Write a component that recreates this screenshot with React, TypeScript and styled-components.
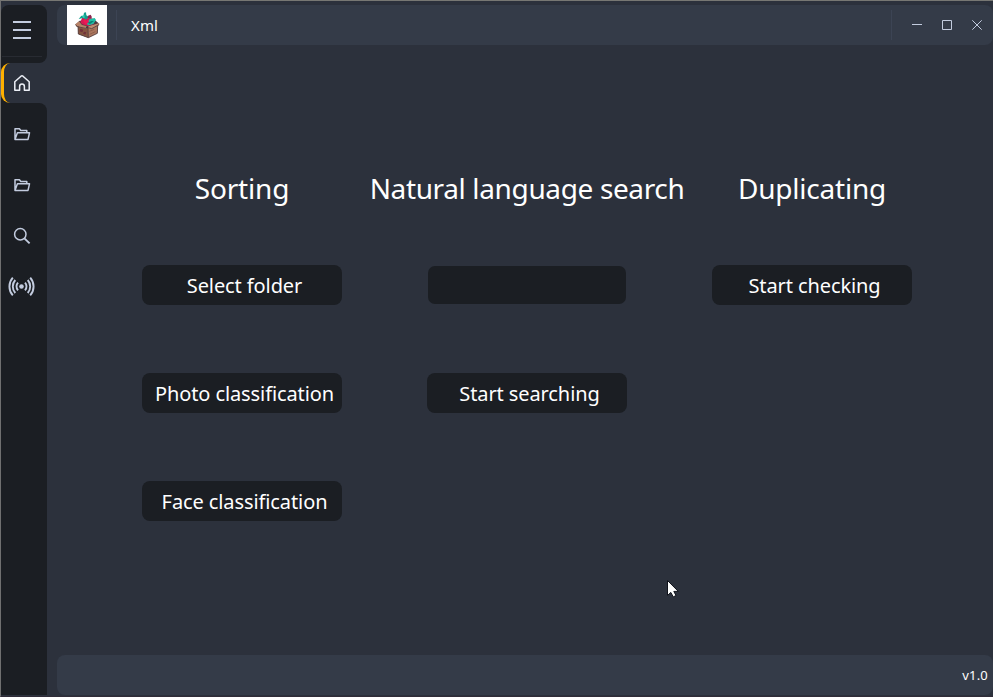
import React from "react";
import styled, { createGlobalStyle } from "styled-components";

const c = {
  bg: "#2c313c",
  bar: "#343b48",
  dark: "#1b1e23",
  icon: "#c3ccdf",
  active: "#ffb000",
};

const Global = createGlobalStyle`
  * { box-sizing: border-box; }
  html, body { margin: 0; background: ${c.bg}; overflow: hidden; }
  body { font-family: "Noto Sans", "Open Sans", sans-serif; color: #fff; }
`;

const Window = styled.div`
  display: flex;
  width: 993px;
  height: 697px;
  padding-top: 4px;
  background: ${c.bg};
  border-top: 1px solid #777773;
  border-left: 1px solid #707070;
  border-bottom: 1px solid #302c38;
`;

const Sidebar = styled.nav`
  display: flex;
  flex-direction: column;
  width: 46px;
  height: 690px;
  flex: none;
`;

const MenuTop = styled.div`
  height: 58px;
  background: ${c.dark};
  border-radius: 8px 8px 8px 0;
`;

const MenuButton = styled.button`
  display: flex;
  align-items: center;
  justify-content: center;
  width: 42px;
  height: 51px;
  padding: 0 0 2px;
  border: 0;
  background: none;
`;

const MenuDivider = styled.div`
  width: 40px;
  height: 1px;
  margin-left: 1px;
  background: #282b32;
`;

const ActiveSlot = styled.div`
  height: 40px;
  background: ${c.dark};
`;

const ActiveItem = styled.div`
  display: flex;
  align-items: center;
  height: 40px;
  padding-left: 10px;
  background: ${c.bg};
  border-left: 3px solid ${c.active};
  border-radius: 9px 0 0 9px;
`;

const MenuRest = styled.div`
  display: flex;
  flex-direction: column;
  align-items: flex-start;
  gap: 11px;
  flex: 1;
  padding-top: 11px;
  background: ${c.dark};
  border-radius: 0 8px 0 0;
`;

const MenuItem = styled.div`
  display: flex;
  align-items: center;
  justify-content: center;
  width: 41px;
  height: 40px;
`;

const Main = styled.main`
  display: flex;
  flex-direction: column;
  flex: 1;
  height: 690px;
  margin-left: 10px;
`;

const TitleBar = styled.header`
  display: flex;
  align-items: center;
  height: 40px;
  padding-left: 10px;
  background: ${c.bar};
  border-radius: 8px;
`;

const Logo = styled.div`
  width: 40px;
  height: 40px;
  margin-right: 9px;
  background: #fff;
`;

const BarDivider = styled.div`
  width: 1px;
  height: 30px;
  background: #3c4454;
`;

const Title = styled.div`
  flex: 1;
  margin-left: 14px;
  font-size: 15px;
  line-height: 40px;
  letter-spacing: 0.1px;
`;

const Controls = styled.div`
  display: flex;
  align-items: center;
  gap: 10px;
  padding: 0 6px 0 15px;
`;

const Control = styled.button`
  display: flex;
  align-items: center;
  justify-content: center;
  width: 20px;
  height: 40px;
  padding: 0;
  border: 0;
  background: none;
`;

const Content = styled.section`
  display: grid;
  grid-template-columns: repeat(3, 200px);
  column-gap: 85px;
  align-items: start;
  flex: 1;
  padding: 123px 0 0 85px;
`;

const Column = styled.div`
  display: flex;
  flex-direction: column;
  align-items: center;
`;

const Heading = styled.h2<{ $spacing?: number }>`
  margin: 0 0 57px;
  font-size: 28px;
  font-weight: 400;
  line-height: 40px;
  letter-spacing: ${(p) => p.$spacing ?? -0.2}px;
  white-space: nowrap;
`;

const Action = styled.button`
  width: 200px;
  height: 40px;
  padding: 2px 0 0 5px;
  border: 0;
  border-radius: 8px;
  background: ${c.dark};
  color: #fff;
  font: 400 20px/38px "Noto Sans", "Open Sans", sans-serif;
  letter-spacing: -0.1px;
  white-space: nowrap;

  & + & {
    margin-top: 68px;
  }
`;

const Query = styled.input`
  width: 198px;
  height: 38px;
  margin: 1px 0 69px;
  padding: 0 10px;
  border: 0;
  border-radius: 7px;
  outline: 0;
  background: ${c.dark};
  color: #fff;
  font: 400 20px "Noto Sans", sans-serif;
`;

const Footer = styled.footer`
  display: flex;
  align-items: center;
  justify-content: flex-end;
  height: 40px;
  padding-right: 5px;
  background: ${c.bar};
  border-radius: 8px;
  font-size: 13px;
  letter-spacing: 0.2px;
`;

const Pointer = styled.svg`
  position: absolute;
  left: 667px;
  top: 580px;
`;

const FolderIcon = () => (
  <svg width="18" height="16" viewBox="0 0 18 16" fill="none" stroke={c.icon} strokeWidth="1.5" strokeLinejoin="round">
    <path d="M2 13.4V2.7h4.4l1.4 1.8h6v2.3M2 13.4 4.4 6.8h12.1l-1.5 6.6z" />
  </svg>
);

const BoxLogo = () => (
  <svg width="40" height="40" viewBox="9 9 120 120">
    <path d="M42 68 71 76 102 68 100 93 73 107 43 96z" fill="#9b6650" />
    <path d="M42 69 71 77 73 107 43 96z" fill="#85543f" />
    <path d="M72 77 102 69 100 94 73 107z" fill="#ab765e" />
    <path d="M34 68 47 56 93 55 106 65 101 72 72 79 39 74z" fill="#4b3942" />
    <path d="M34 67 45 58 54 69 68 72 64 80 38 74z" fill="#b78267" />
    <path d="M73 73 96 66 105 63 106 69 83 80 73 79z" fill="#c08b70" />
    <path d="M49 60 55 46 68 48 84 49 91 57 88 67 72 72 54 67z" fill="#d51b52" />
    <path d="M44 51 52 41 58 43 60 32 66 31 67 40 75 45 66 53 57 48z" fill="#159e8d" />
    <path d="M54 41 61 39 62 48 57 47z" fill="#31d2b4" />
    <path d="M70 60 77 51 92 48 96 54 88 66 75 70 69 67z" fill="#20bda4" />
    <path d="M70 62 82 57 90 57 78 66z" fill="#0b8176" />
    <path d="M72 41 80 38 84 46 79 50 71 48z" fill="#8c244e" />
    <path d="M59 54 64 52 67 56 72 53 75 59 66 68 59 60z" fill="#ee1856" />
    <path d="M49 80 58 83 55 91 47 88zM60 89 67 91 64 98 57 95z" fill="#72313a" />
    <path d="M72 78 73 106M42 72 43 96 73 107 100 94 101 72M35 68 40 74 65 79M105 68 83 80 73 77" fill="none" stroke="#513c3d" strokeWidth="2.5" />
    <path d="M76 88 91 82M77 97 94 89" stroke="#825443" strokeWidth="2" />
  </svg>
);

export default function App() {
  return (
    <>
      <Global />
      <Window>
        <Sidebar>
          <MenuTop>
            <MenuButton aria-label="Menu">
              <svg width="18" height="18" viewBox="0 0 18 18" fill={c.icon}>
                <path d="M0 0h18v2H0zM0 8h18v2H0zM0 16h18v2H0z" />
              </svg>
            </MenuButton>
            <MenuDivider />
          </MenuTop>
          <ActiveSlot>
            <ActiveItem>
              <svg width="16" height="16" viewBox="0 0 16 16" fill="none" stroke="#edf0f7" strokeWidth="1.5" strokeLinejoin="round">
                <path d="M.8 6.7 7 1.2q1-.8 2 0l6.2 5.5v8.5h-4.8v-3.7a2.4 2.4 0 0 0-4.8 0v3.7H.8z" />
              </svg>
            </ActiveItem>
          </ActiveSlot>
          <MenuRest>
            <MenuItem><FolderIcon /></MenuItem>
            <MenuItem><FolderIcon /></MenuItem>
            <MenuItem>
              <svg width="18" height="18" viewBox="0 0 18 18" fill="none" stroke={c.icon} strokeWidth="1.5">
                <circle cx="7.3" cy="7.3" r="5.7" />
                <path d="m11.4 11.4 5.2 5" strokeWidth="1.9" />
              </svg>
            </MenuItem>
            <MenuItem>
              <svg width="27" height="22" viewBox="0 0 27 22" fill="none" stroke={c.icon} strokeWidth="1.9">
                <circle cx="13.5" cy="10.5" r="2.3" fill={c.icon} stroke="none" />
                <path d="M10 6.7a6 6 0 0 0 0 7.6M17 6.7a6 6 0 0 1 0 7.6M7.3 4a9.7 9.7 0 0 0 0 13M19.7 4a9.7 9.7 0 0 1 0 13M4.8 1.6a13.4 13.4 0 0 0 0 17.8M22.2 1.6a13.4 13.4 0 0 1 0 17.8" />
              </svg>
            </MenuItem>
          </MenuRest>
        </Sidebar>
        <Main>
          <TitleBar>
            <Logo><BoxLogo /></Logo>
            <BarDivider />
            <Title>Xml</Title>
            <BarDivider />
            <Controls>
              <Control aria-label="Minimize">
                <svg width="10" height="10" viewBox="0 0 10 10"><path d="M0 4h10v1H0z" fill={c.icon} /></svg>
              </Control>
              <Control aria-label="Maximize">
                <svg width="10" height="10" viewBox="0 0 10 10"><path d="M.5.5h9v9h-9z" fill="none" stroke={c.icon} /></svg>
              </Control>
              <Control aria-label="Close">
                <svg width="10" height="10" viewBox="0 0 10 10"><path d="m.3.3 9.4 9.4M9.7.3.3 9.7" stroke={c.icon} /></svg>
              </Control>
            </Controls>
          </TitleBar>
          <Content>
            <Column>
              <Heading>Sorting</Heading>
              <Action>Select folder</Action>
              <Action>Photo classification</Action>
              <Action>Face classification</Action>
            </Column>
            <Column>
              <Heading $spacing={-0.36}>Natural language search</Heading>
              <Query aria-label="Search" />
              <Action>Start searching</Action>
            </Column>
            <Column>
              <Heading>Duplicating</Heading>
              <Action>Start checking</Action>
            </Column>
          </Content>
          <Footer>v1.0</Footer>
        </Main>
      </Window>
      <Pointer width="12" height="19" viewBox="0 0 12 19">
        <path d="M.5.5v15l3.3-3.1 2.5 4.5 2.7-1.4-2.2-4.1h4.5z" fill="#fff" stroke="#10131b" />
      </Pointer>
    </>
  );
}
